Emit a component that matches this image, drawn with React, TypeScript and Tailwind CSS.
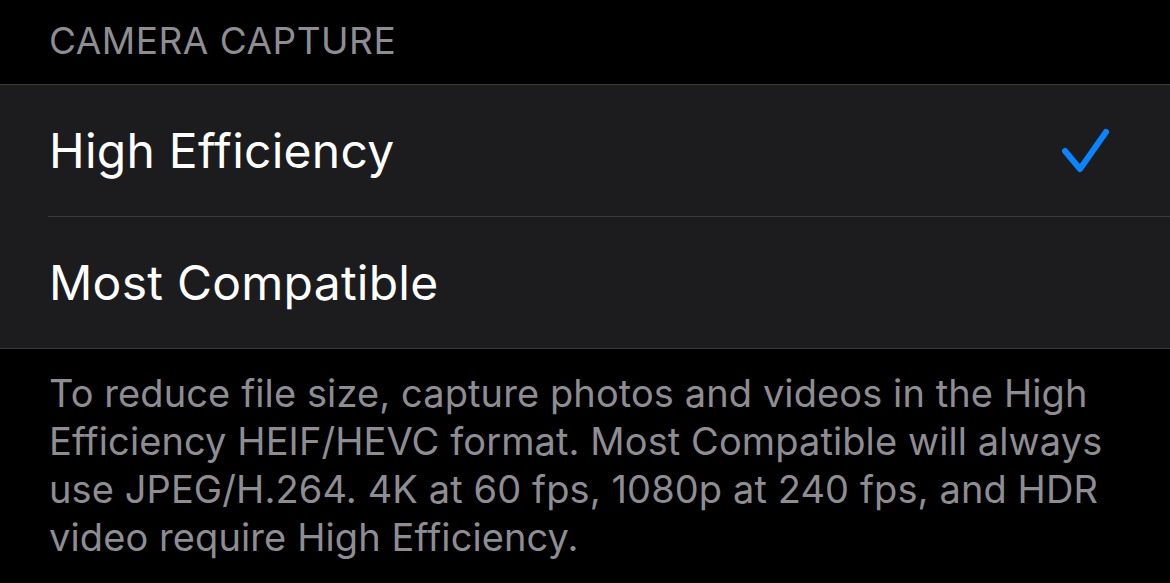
import React from 'react';

function Check() {
  return (
    <svg width="48" height="46" viewBox="0 0 48 46" fill="none">
      <path d="M3 23 L18 41 L44 4" stroke="#0a84ff" strokeWidth="6" strokeLinecap="round" strokeLinejoin="round" />
    </svg>
  );
}

export default function App() {
  return (
    <div className="w-[1170px] h-[583px] bg-black overflow-hidden font-['Inter',sans-serif]">
      <div className="h-[84px] px-[49px] pt-[18px] text-[37px] leading-[45px] tracking-[0.5px] text-[#8d8d93]">
        CAMERA CAPTURE
      </div>
      <div className="bg-[#1c1c1e] border-y border-[#3a3a3c]">
        <div className="flex items-center h-[131px] pl-[49px] pr-[60px]">
          <div className="flex-1 text-[48px] tracking-[0.25px] text-white">High Efficiency</div>
          <Check />
        </div>
        <div className="ml-[48px] h-px bg-[#3a3a3c]" />
        <div className="flex items-center h-[131px] pl-[49px] pr-[60px]">
          <div className="flex-1 text-[48px] tracking-[0.25px] text-white">Most Compatible</div>
        </div>
      </div>
      <div className="px-[49px] pt-[20px] text-[38px] leading-[48px] tracking-[0.1px] text-[#8d8d93]">
        To reduce file size, capture photos and videos in the High Efficiency HEIF/HEVC format. Most Compatible will always use JPEG/H.264. 4K at 60 fps, 1080p at 240 fps, and HDR video require High Efficiency.
      </div>
    </div>
  );
}
